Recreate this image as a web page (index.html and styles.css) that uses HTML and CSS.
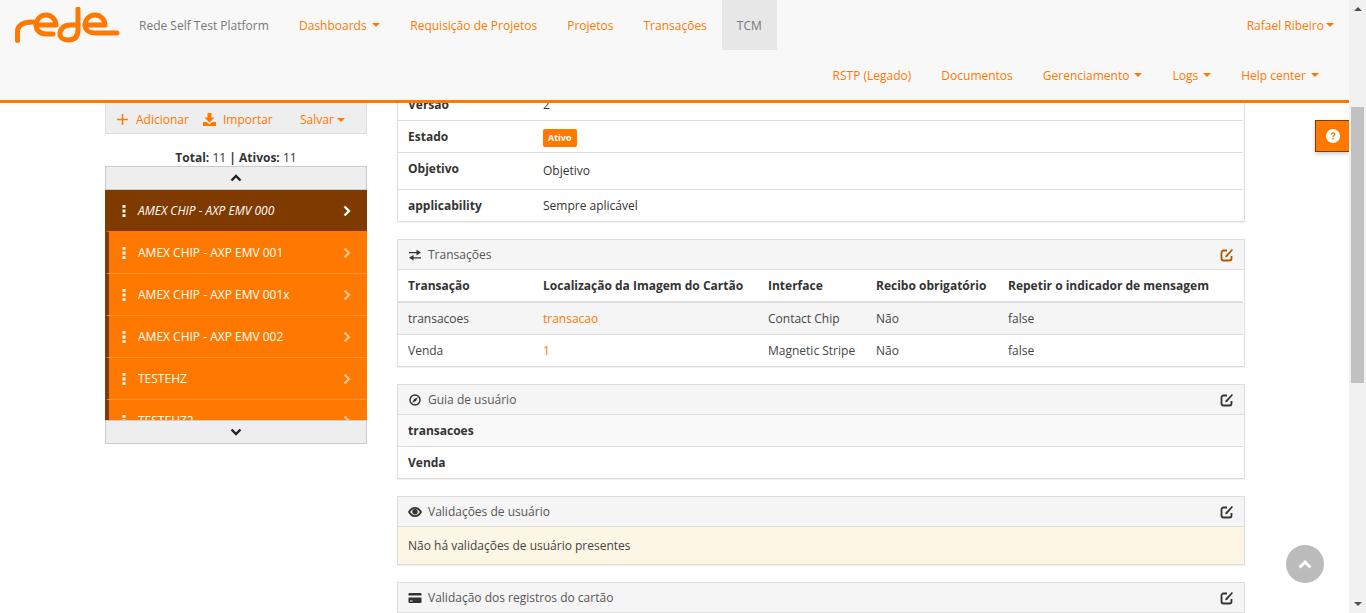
FILE: index.html
```html
<!DOCTYPE html>
<html lang="pt">
<head>
<meta charset="utf-8">
<title>Rede Self Test Platform</title>
<link rel="stylesheet" href="styles.css">
</head>
<body>
<svg class="sprites" width="0" height="0" aria-hidden="true">
  <symbol id="i-chev-up" viewBox="0 0 12 8"><path d="M1.500 6.500 6 2l4.500 4.500" fill="none" stroke="currentColor" stroke-width="2.400"/></symbol>
  <symbol id="i-chev-down" viewBox="0 0 12 8"><path d="M1.500 1.500 6 6l4.500-4.500" fill="none" stroke="currentColor" stroke-width="2.400"/></symbol>
  <symbol id="i-chev-right" viewBox="0 0 8 12"><path d="M1.500 1.500 6 6l-4.500 4.500" fill="none" stroke="currentColor" stroke-width="2.400"/></symbol>
  <symbol id="i-dots" viewBox="0 0 4 12"><path d="M.5 0h3v2.800h-3zM.5 4.600h3v2.800h-3zM.5 9.200h3V12h-3z" fill="currentColor"/></symbol>
  <symbol id="i-edit" viewBox="0 0 14 14"><path d="M7 2.500H3.500A2 2 0 0 0 1.500 4.500v6a2 2 0 0 0 2 2h6a2 2 0 0 0 2-2V8" fill="none" stroke="currentColor" stroke-width="1.800"/><path d="M5.200 9.300l.4-1.900L11.900 1l1.100 1.100-6 6.800z" fill="currentColor"/></symbol>
</svg>

<div class="page">
  <header class="navbar">
    <div class="nav-row">
      <a class="logo" href="#" aria-label="Rede">
        <svg width="106" height="36" viewBox="0 0 106 36"><g fill="none" stroke="#ff7800" stroke-width="5" stroke-linecap="round" stroke-linejoin="round"><path d="M2.500 33.500V25C2.500 18 8 15 18 15"/><path d="M21 18H41C41 12 36 8 31 8 25 8 21 13 21 18c0 5 4 9 10 9h7"/><path d="M63 18H55C49 18 45 22 45 27c0 4 4 6 8 6 7 0 10-4 10-10V2"/><path d="M70 18H90C90 12 85 8 80 8 74 8 70 13 70 18c0 5 4 8 10 8h22"/></g></svg>
      </a>
      <a class="brand" href="#">Rede Self Test Platform</a>
      <nav class="nav-list">
        <a class="nav-link" href="#">Dashboards<span class="caret"></span></a>
        <a class="nav-link" href="#">Requisição de Projetos</a>
        <a class="nav-link" href="#">Projetos</a>
        <a class="nav-link" href="#">Transações</a>
        <a class="nav-link active" href="#">TCM</a>
      </nav>
      <a class="nav-link user" href="#">Rafael Ribeiro<span class="caret tight"></span></a>
    </div>
    <nav class="nav-row second">
      <a class="nav-link" href="#">RSTP (Legado)</a>
      <a class="nav-link" href="#">Documentos</a>
      <a class="nav-link" href="#">Gerenciamento<span class="caret"></span></a>
      <a class="nav-link" href="#">Logs<span class="caret"></span></a>
      <a class="nav-link" href="#">Help center<span class="caret"></span></a>
    </nav>
  </header>

  <div class="content">
    <aside class="sidebar">
      <div class="toolbar">
        <a class="tool tool-add" href="#"><svg class="tool-icon" width="11" height="11" viewBox="0 0 11 11"><path d="M5.500 0v11M0 5.500h11" stroke="currentColor" stroke-width="1.500"/></svg>Adicionar</a>
        <a class="tool tool-import" href="#"><svg class="tool-icon" width="13" height="13" viewBox="0 0 13 13"><path d="M4.500 0h4v4.500h3L6.500 9.500l-5-5h3zM0 9h3.500l3 2.200 3-2.200H13v4H0z" fill="currentColor"/></svg>Importar</a>
        <a class="tool tool-save" href="#">Salvar<span class="caret"></span></a>
      </div>
      <p class="totals"><b>Total:</b> 11 <b>| Ativos:</b> 11</p>
      <button class="scroll-btn" type="button" aria-label="Subir"><svg width="12" height="8"><use href="#i-chev-up"/></svg></button>
      <ul class="test-list">
        <li class="test-item selected"><svg class="dots" width="4" height="12"><use href="#i-dots"/></svg><span class="test-name">AMEX CHIP - AXP EMV 000</span><svg class="chev" width="8" height="12"><use href="#i-chev-right"/></svg></li>
        <li class="test-item"><svg class="dots" width="4" height="12"><use href="#i-dots"/></svg><span class="test-name">AMEX CHIP - AXP EMV 001</span><svg class="chev" width="8" height="12"><use href="#i-chev-right"/></svg></li>
        <li class="test-item"><svg class="dots" width="4" height="12"><use href="#i-dots"/></svg><span class="test-name">AMEX CHIP - AXP EMV 001x</span><svg class="chev" width="8" height="12"><use href="#i-chev-right"/></svg></li>
        <li class="test-item"><svg class="dots" width="4" height="12"><use href="#i-dots"/></svg><span class="test-name">AMEX CHIP - AXP EMV 002</span><svg class="chev" width="8" height="12"><use href="#i-chev-right"/></svg></li>
        <li class="test-item"><svg class="dots" width="4" height="12"><use href="#i-dots"/></svg><span class="test-name">TESTEHZ</span><svg class="chev" width="8" height="12"><use href="#i-chev-right"/></svg></li>
        <li class="test-item"><svg class="dots" width="4" height="12"><use href="#i-dots"/></svg><span class="test-name">TESTEHZ2</span><svg class="chev" width="8" height="12"><use href="#i-chev-right"/></svg></li>
      </ul>
      <button class="scroll-btn" type="button" aria-label="Descer"><svg width="12" height="8"><use href="#i-chev-down"/></svg></button>
    </aside>

    <main class="details">
      <section class="panel">
        <div class="kv"><b>Versão</b><span>2</span></div>
        <div class="kv"><b>Estado</b><span class="badge">Ativo</span></div>
        <div class="kv tall"><b>Objetivo</b><span class="lower">Objetivo</span></div>
        <div class="kv last"><b>applicability</b><span>Sempre aplicável</span></div>
      </section>

      <section class="panel">
        <h2 class="panel-head">
          <svg class="head-icon" width="12" height="12" viewBox="0 0 12 12"><path d="M0 3h7.500V.8L12 3.600 7.500 6.400V4.300H0zM12 8.200H4.500V6L0 8.800l4.500 2.800V9.500H12z" fill="#333"/></svg>
          <span class="head-title">Transações</span>
          <svg class="edit orange" width="14" height="14"><use href="#i-edit"/></svg>
        </h2>
        <div class="trow thead"><b>Transação</b><b>Localização da Imagem do Cartão</b><b>Interface</b><b>Recibo obrigatório</b><b>Repetir o indicador de mensagem</b></div>
        <div class="trow striped"><span>transacoes</span><a href="#">transacao</a><span>Contact Chip</span><span>Não</span><span>false</span></div>
        <div class="trow last"><span>Venda</span><a href="#">1</a><span>Magnetic Stripe</span><span>Não</span><span>false</span></div>
      </section>

      <section class="panel">
        <h2 class="panel-head">
          <svg class="head-icon" width="12" height="12" viewBox="0 0 12 12"><circle cx="6" cy="6" r="5" fill="none" stroke="#333" stroke-width="1.500"/><path d="M8.800 3.200 7 7 3.200 8.800 5 5z" fill="#333"/></svg>
          <span class="head-title">Guia de usuário</span>
          <svg class="edit" width="14" height="14"><use href="#i-edit"/></svg>
        </h2>
        <div class="kv striped-soft"><b>transacoes</b></div>
        <div class="kv last"><b>Venda</b></div>
      </section>

      <section class="panel">
        <h2 class="panel-head">
          <svg class="head-icon" width="14" height="10" viewBox="0 0 14 10"><path d="M7 0c3 0 5.500 2 7 5-1.500 3-4 5-7 5S1.500 8 0 5c1.500-3 4-5 7-5zm-4.800 5C3.300 6.800 5 8.200 7 8.200S10.700 6.800 11.800 5C10.700 3.200 9 1.800 7 1.800S3.300 3.200 2.200 5z" fill="#333"/><circle cx="7" cy="4.800" r="2.700" fill="#333"/></svg>
          <span class="head-title">Validações de usuário</span>
          <svg class="edit" width="14" height="14"><use href="#i-edit"/></svg>
        </h2>
        <p class="notice">Não há validações de usuário presentes</p>
      </section>

      <section class="panel">
        <h2 class="panel-head">
          <svg class="head-icon" width="13" height="10" viewBox="0 0 13 10"><path d="M1 0h11a1 1 0 0 1 1 1v1.500H0V1a1 1 0 0 1 1-1zM0 4.500h13V9a1 1 0 0 1-1 1H1a1 1 0 0 1-1-1zM1.500 7.500V8.500H4V7.500z" fill="#333"/></svg>
          <span class="head-title">Validação dos registros do cartão</span>
          <svg class="edit" width="14" height="14"><use href="#i-edit"/></svg>
        </h2>
      </section>
    </main>
  </div>

  <a class="help-tab" href="#" aria-label="Ajuda"><svg width="14" height="14" viewBox="0 0 14 14"><circle cx="7" cy="7" r="7" fill="#fff"/><path d="M4.700 5.400C4.800 4 5.800 3.200 7.100 3.200c1.400 0 2.300.9 2.300 2 0 1.800-1.900 1.700-1.900 3.100H6.200c0-2 1.800-2 1.800-3.100 0-.5-.4-.8-.9-.8-.6 0-1 .4-1.100 1zM6.200 9h1.400v1.500H6.200z" fill="#ff7800"/></svg></a>
  <a class="to-top" href="#" aria-label="Topo"><svg width="14" height="9" viewBox="0 0 14 9"><path d="M1.500 7.500 7 2.200l5.500 5.300" fill="none" stroke="#fff" stroke-width="3"/></svg></a>
</div>

<div class="scrollbar" aria-hidden="true">
  <span class="arrow-up"></span>
  <span class="thumb"></span>
  <span class="arrow-down"></span>
</div>
</body>
</html>
```

FILE: styles.css
```css
* { box-sizing: border-box; }

html, body {
  margin: 0;
  height: 613px;
  overflow: hidden;
}

body {
  display: flex;
  font-family: "Open Sans", "Liberation Sans", sans-serif;
  font-size: 12px;
  line-height: 17px;
  color: #333;
  background: #fff;
}

a { color: #ff7800; text-decoration: none; }
.sprites { position: absolute; }

.page {
  position: relative;
  flex: 1;
  height: 613px;
  overflow: hidden;
}

/* top bar */
.navbar {
  position: absolute;
  top: 0;
  left: 0;
  right: 0;
  z-index: 5;
  height: 103px;
  background: #f8f8f8;
  border-bottom: 3px solid #ff7800;
}

.nav-row {
  display: flex;
  align-items: stretch;
  height: 50px;
  padding-right: 15px;
}

.nav-row.second {
  justify-content: flex-end;
}

.logo {
  display: flex;
  align-items: flex-start;
  width: 124px;
  padding: 7px 0 0 15px;
}

.brand {
  display: flex;
  flex: none;
  align-items: center;
  width: 160px;
  padding-left: 15px;
  color: #777;
}

.nav-list { display: flex; flex: 1; }

.nav-link {
  display: flex;
  align-items: center;
  padding: 0 15px;
  white-space: nowrap;
}

.nav-list .nav-link:first-child { padding-right: 15.6px; }
.nav-link.active { background: #e7e7e7; color: #777; }
.nav-link.user { padding-right: 0; }

.caret {
  display: inline-block;
  width: 0;
  height: 0;
  margin-left: 5px;
  border-top: 4px solid currentColor;
  border-left: 4px solid transparent;
  border-right: 4px solid transparent;
}
.caret.tight { margin-left: 2px; }

/* page columns */
.content {
  display: flex;
  gap: 30px;
  width: 1245px;
  padding-left: 105px;
}

.sidebar {
  flex: none;
  width: 262px;
  padding-top: 90px;
}

.toolbar {
  display: flex;
  align-items: flex-end;
  height: 44px;
  padding: 0 0 5px 11px;
  background: #eee;
  border: 1px solid #ddd;
  border-top: 0;
}

.tool { display: flex; align-items: center; white-space: nowrap; }
.tool-icon { flex: none; margin-right: 8px; }
.tool-add { width: 86px; }
.tool-import { width: 97px; }
.tool-import .tool-icon { margin-right: 7px; }
.tool-save .caret { margin-left: 3px; }

.totals {
  height: 17px;
  margin: 15px 0 0;
  text-align: center;
}
.totals b { font-weight: 700; }

.scroll-btn {
  display: flex;
  align-items: center;
  justify-content: center;
  width: 100%;
  height: 24px;
  padding: 0;
  color: #222;
  background: #eee;
  border: 1px solid #ccc;
}

.test-list {
  height: 230px;
  margin: 0;
  padding: 0;
  overflow: hidden;
  list-style: none;
}

.test-item {
  display: flex;
  align-items: center;
  height: 42px;
  padding-left: 13px;
  color: #fff;
  background: #ff7800;
  border-left: 4px solid #7f3a00;
  border-bottom: 1px solid #ff9433;
}

.test-item.selected {
  background: #7f3a00;
  border-bottom-color: #ff7800;
  font-style: italic;
}

.dots { flex: none; }
.test-name { flex: 1; margin-left: 12px; }
.chev { flex: none; margin-right: 16px; opacity: .55; }
.selected .chev { opacity: 1; }

/* detail panels */
.details {
  flex: 1;
  min-width: 0;
  padding-top: 88px;
}

.panel {
  margin-bottom: 17px;
  border: 1px solid #ddd;
  box-shadow: 0 1px 1px rgba(0, 0, 0, .05);
}

.panel-head {
  display: flex;
  align-items: center;
  height: 30px;
  margin: 0;
  padding: 0 10px;
  font-size: 12px;
  font-weight: 400;
  line-height: 17px;
  color: #555;
  background: #f5f5f5;
  border-bottom: 1px solid #ddd;
}

.head-icon { flex: none; width: 14px; }
.head-title { flex: 1; margin-left: 6px; }
.edit { flex: none; color: #333; }
.edit.orange { color: #b35400; }

.kv {
  display: flex;
  align-items: flex-start;
  height: 32px;
  margin-right: 1px;
  padding: 7px 0 0 10px;
  border-bottom: 1px solid #ddd;
}
.kv b { flex: none; width: 135px; }
.kv.tall { height: 37px; }
.kv.last { height: 31px; border-bottom: 0; }
.lower { margin-top: 2px; }
.striped-soft { background: #f9f9f9; }

.badge {
  display: inline-block;
  height: 18px;
  margin-top: 1px;
  padding: 0 5px;
  font-size: 9px;
  font-weight: 700;
  line-height: 18px;
  color: #fff;
  background: #ff7800;
  border-radius: 2px;
}

.trow {
  display: grid;
  grid-template-columns: 135px 225px 108px 132px 1fr;
  align-items: center;
  height: 32px;
  margin-right: 1px;
  padding-left: 10px;
  color: #444;
  border-bottom: 1px solid #ddd;
}
.trow.thead { height: 33px; color: #333; border-bottom-width: 2px; }
.trow.striped { background: #f5f5f5; }
.trow.last { height: 31px; border-bottom: 0; }

.notice {
  display: flex;
  align-items: center;
  height: 37px;
  margin: 0;
  padding-left: 10px;
  color: #444;
  background: #fcf6e5;
}

/* floating */
.help-tab {
  position: absolute;
  top: 120px;
  right: 0;
  z-index: 4;
  display: flex;
  align-items: center;
  justify-content: center;
  width: 34px;
  height: 32px;
  background: #ff7800;
  border: 1px solid #7f3a00;
  border-right: 0;
  box-shadow: 0 2px 4px rgba(0, 0, 0, .2);
}

.to-top {
  position: absolute;
  top: 545px;
  left: 1286px;
  z-index: 4;
  display: flex;
  align-items: center;
  justify-content: center;
  width: 38px;
  height: 38px;
  background: #bbb;
  border-radius: 50%;
}

/* scrollbar */
.scrollbar {
  flex: none;
  position: relative;
  width: 17px;
  height: 613px;
  background: #f1f1f1;
}
.arrow-up, .arrow-down {
  position: absolute;
  left: 5px;
  width: 0;
  height: 0;
  border-left: 4px solid transparent;
  border-right: 4px solid transparent;
}
.arrow-up { top: 7px; border-bottom: 4px solid #505050; }
.arrow-down { bottom: 7px; border-top: 4px solid #505050; }
.thumb {
  position: absolute;
  top: 107px;
  left: 2px;
  width: 13px;
  height: 276px;
  background: #c1c1c1;
}
```
